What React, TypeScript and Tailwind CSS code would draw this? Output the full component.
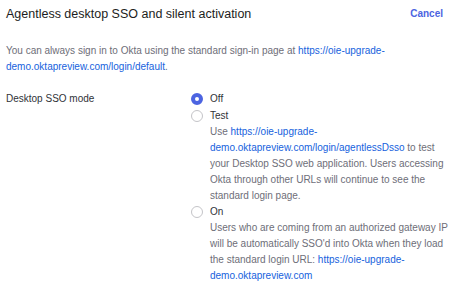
import React from 'react';

const Radio = ({ checked }: { checked?: boolean }) =>
  checked ? (
    <span className="mt-[2px] box-border block h-[12px] w-[12px] shrink-0 rounded-full border-[4px] border-[#4c64e1] bg-white" />
  ) : (
    <span className="mt-[2px] box-border block h-[12px] w-[12px] shrink-0 rounded-full border border-[#c4c4c8] bg-white" />
  );

const Link = ({ children }: { children: React.ReactNode }) => (
  <a className="text-[#1662dd]">{children}</a>
);

const App = () => {
  return (
    <div className="h-[286px] w-[454px] bg-white pl-[6px] pr-[4px] font-['Liberation_Sans',Arial,sans-serif] text-[10px] leading-[16px] text-[#6e6e78]">
      <div className="flex items-center justify-between pt-[4px]">
        <h1 className="text-[12.5px] leading-[20px] font-normal text-[#1d1d21]">
          Agentless desktop SSO and silent activation
        </h1>
        <button className="mr-[7px] text-[10px] font-bold text-[#4c64e1]">Cancel</button>
      </div>
      <p className="mt-[19px]">
        You can always sign in to Okta using the standard sign-in page at{' '}
        <Link>https://oie-upgrade-demo.oktapreview.com/login/default</Link>.
      </p>
      <div className="mt-[16px] flex">
        <div className="w-[185px] shrink-0 text-[#2f3237]">Desktop SSO mode</div>
        <div className="flex flex-col">
          <div className="flex gap-[7px]">
            <Radio checked />
            <span className="text-[#2f3237]">Off</span>
          </div>
          <div className="mt-[1px] flex gap-[7px]">
            <Radio />
            <div>
              <div className="text-[#2f3237]">Test</div>
              <p>
                Use <Link>https://oie-upgrade-demo.oktapreview.com/login/agentlessDsso</Link> to test
                your Desktop SSO web application. Users accessing Okta through other URLs will
                continue to see the standard login page.
              </p>
            </div>
          </div>
          <div className="flex gap-[7px]">
            <Radio />
            <div>
              <div className="text-[#2f3237]">On</div>
              <p>
                Users who are coming from an authorized gateway IP will be automatically SSO'd into
                Okta when they load the standard login URL:{' '}
                <Link>https://oie-upgrade-demo.oktapreview.com</Link>
              </p>
            </div>
          </div>
        </div>
      </div>
    </div>
  );
};

export default App;
